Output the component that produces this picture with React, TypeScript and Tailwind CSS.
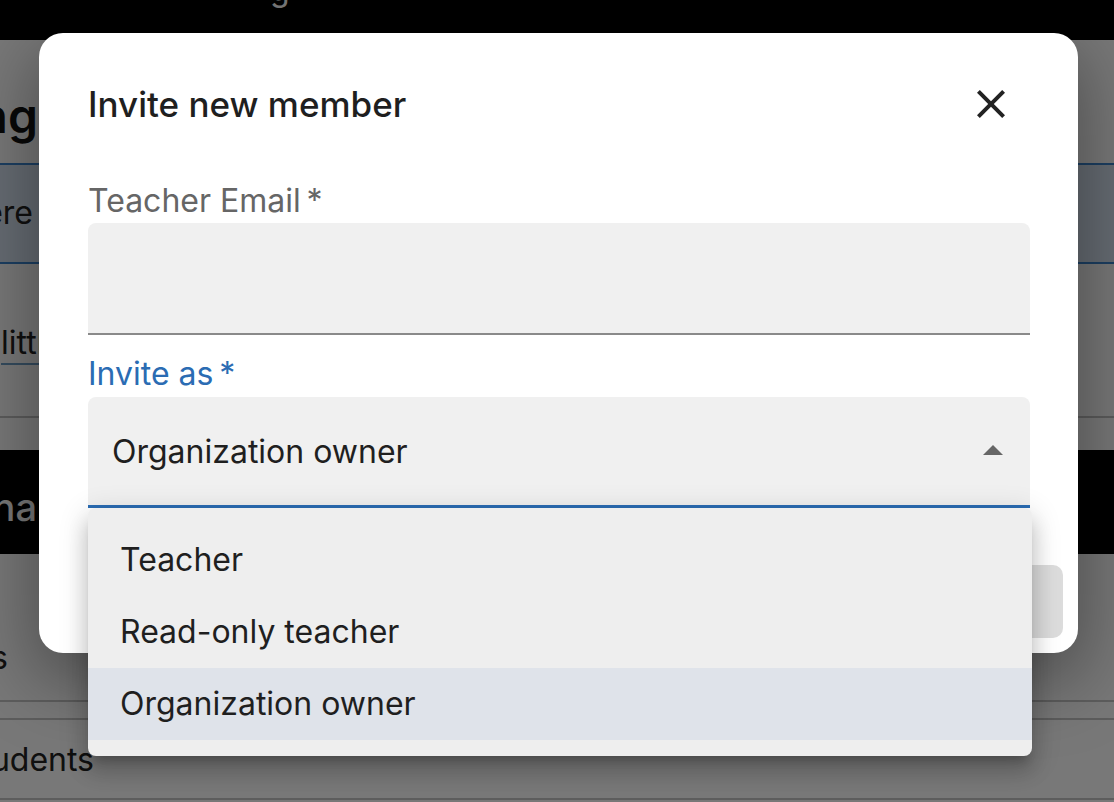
import React from "react";

const font = { fontFamily: "Inter, 'Noto Sans', 'Liberation Sans', sans-serif" };

function EndText({ w, children, className }: { w: number; children: React.ReactNode; className?: string }) {
  return (
    <div className="flex justify-end whitespace-nowrap" style={{ width: w }}>
      <span className={className}>{children}</span>
    </div>
  );
}

function Page() {
  return (
    <div className="w-[1114px] h-[802px] overflow-hidden bg-white text-[#222]">
      <div className="h-[40px] bg-black overflow-hidden">
        <div className="-mt-[30px] pl-[270px] text-[32px] leading-[40px] text-white">g</div>
      </div>
      <div className="h-[123px] pt-[46px]">
        <EndText w={38} className="text-[48px] leading-[60px] font-semibold text-[#111]">Settings and managing</EndText>
      </div>
      <div className="h-[101px] border-y-2 border-[#3d86d0] bg-[#d8e6f4] pt-[28px]">
        <EndText w={33} className="text-[32px] leading-[40px] text-[#222]">Everything here</EndText>
      </div>
      <div className="h-[154px] border-b-2 border-[#c4c4c4] pt-[59px]">
        <div className="pl-[1px] whitespace-nowrap text-[32px] leading-[40px] text-[#222] underline decoration-[#6fa0c8] decoration-2 underline-offset-[9px]">little more</div>
      </div>
      <div className="h-[32px]" />
      <div className="h-[104px] bg-black pt-[33px]">
        <EndText w={37} className="text-[38px] leading-[48px] text-white font-medium">Mana</EndText>
      </div>
      <div className="h-[148px] border-b-2 border-[#c6c6c6] pt-[84px]">
        <EndText w={8} className="text-[32px] leading-[40px] text-[#222]">Teachers</EndText>
      </div>
      <div className="h-[18px] border-b-2 border-[#c6c6c6]" />
      <div className="h-[80px] border-b-2 border-[#c6c6c6] pt-[20px]">
        <EndText w={94} className="text-[32px] leading-[40px] text-[#222]">Students</EndText>
      </div>
    </div>
  );
}

export default function App() {
  return (
    <div className="relative w-[1114px] h-[802px] overflow-hidden" style={font}>
      <Page />
      <div className="absolute inset-0 bg-black/[0.53]" />
      <div className="absolute left-[39px] top-[33px] w-[1039px] h-[620px] rounded-[24px] bg-white shadow-[0_22px_70px_8px_rgba(0,0,0,0.35)] pl-[49px] pr-[48px] pt-[47px]">
        <div className="flex items-center justify-between h-[48px]">
          <div className="text-[35px] leading-[48px] font-medium text-[#1f1f1f]">Invite new member</div>
          <button className="w-[48px] h-[48px] mr-[15px] flex items-center justify-center">
            <svg width="48" height="48" viewBox="0 0 24 24" fill="#222">
              <path d="M19 6.41 17.59 5 12 10.59 6.41 5 5 6.41 10.59 12 5 17.59 6.41 19 12 13.41 17.59 19 19 17.59 13.41 12z" />
            </svg>
          </button>
        </div>
        <div className="mt-[53px] h-[40px] text-[32px] leading-[40px] text-[#666]">Teacher Email{"\u2009"}*</div>
        <div className="mt-[2px] h-[112px] bg-[#f0f0f0] rounded-t-[8px] border-b-2 border-[#8a8a8a]" />
        <div className="mt-[19px] h-[40px] text-[32px] leading-[40px] text-[#2b6cb3]">Invite as{"\u2009"}*</div>
        <div className="relative mt-[3px]">
          <div className="h-[111px] bg-[#f0f0f0] rounded-t-[8px] border-b-[3px] border-[#2b6cb3] flex items-center pl-[24px] pr-[13px]">
            <div className="flex-1 text-[32px] leading-[40px] text-[#1f1f1f] mt-[2px]">Organization owner</div>
            <svg width="48" height="48" viewBox="0 0 24 24" fill="#666">
              <path d="M7 14l5-5 5 5z" />
            </svg>
          </div>
          <div className="absolute left-0 top-full w-[944px] z-10 bg-[#eeeeee] rounded-[8px] py-[16px] shadow-[0_10px_10px_-6px_rgba(0,0,0,0.2),0_16px_20px_2px_rgba(0,0,0,0.14),0_6px_28px_4px_rgba(0,0,0,0.12)]">
            {["Teacher", "Read-only teacher", "Organization owner"].map((t, i) => (
              <div
                key={t}
                className={
                  "h-[72px] pl-[32px] pt-[16px] text-[32px] leading-[40px] text-[#1f1f1f] " +
                  (i === 2 ? "bg-[#dfe3ea]" : "")
                }
              >
                {t}
              </div>
            ))}
          </div>
        </div>
        <div className="mt-[57px] -mr-[33px] flex justify-end">
          <button className="w-[380px] h-[73px] rounded-[10px] bg-[#dcdcdc] text-[30px] text-[#a0a0a0]">Send invitation</button>
        </div>
      </div>
    </div>
  );
}
